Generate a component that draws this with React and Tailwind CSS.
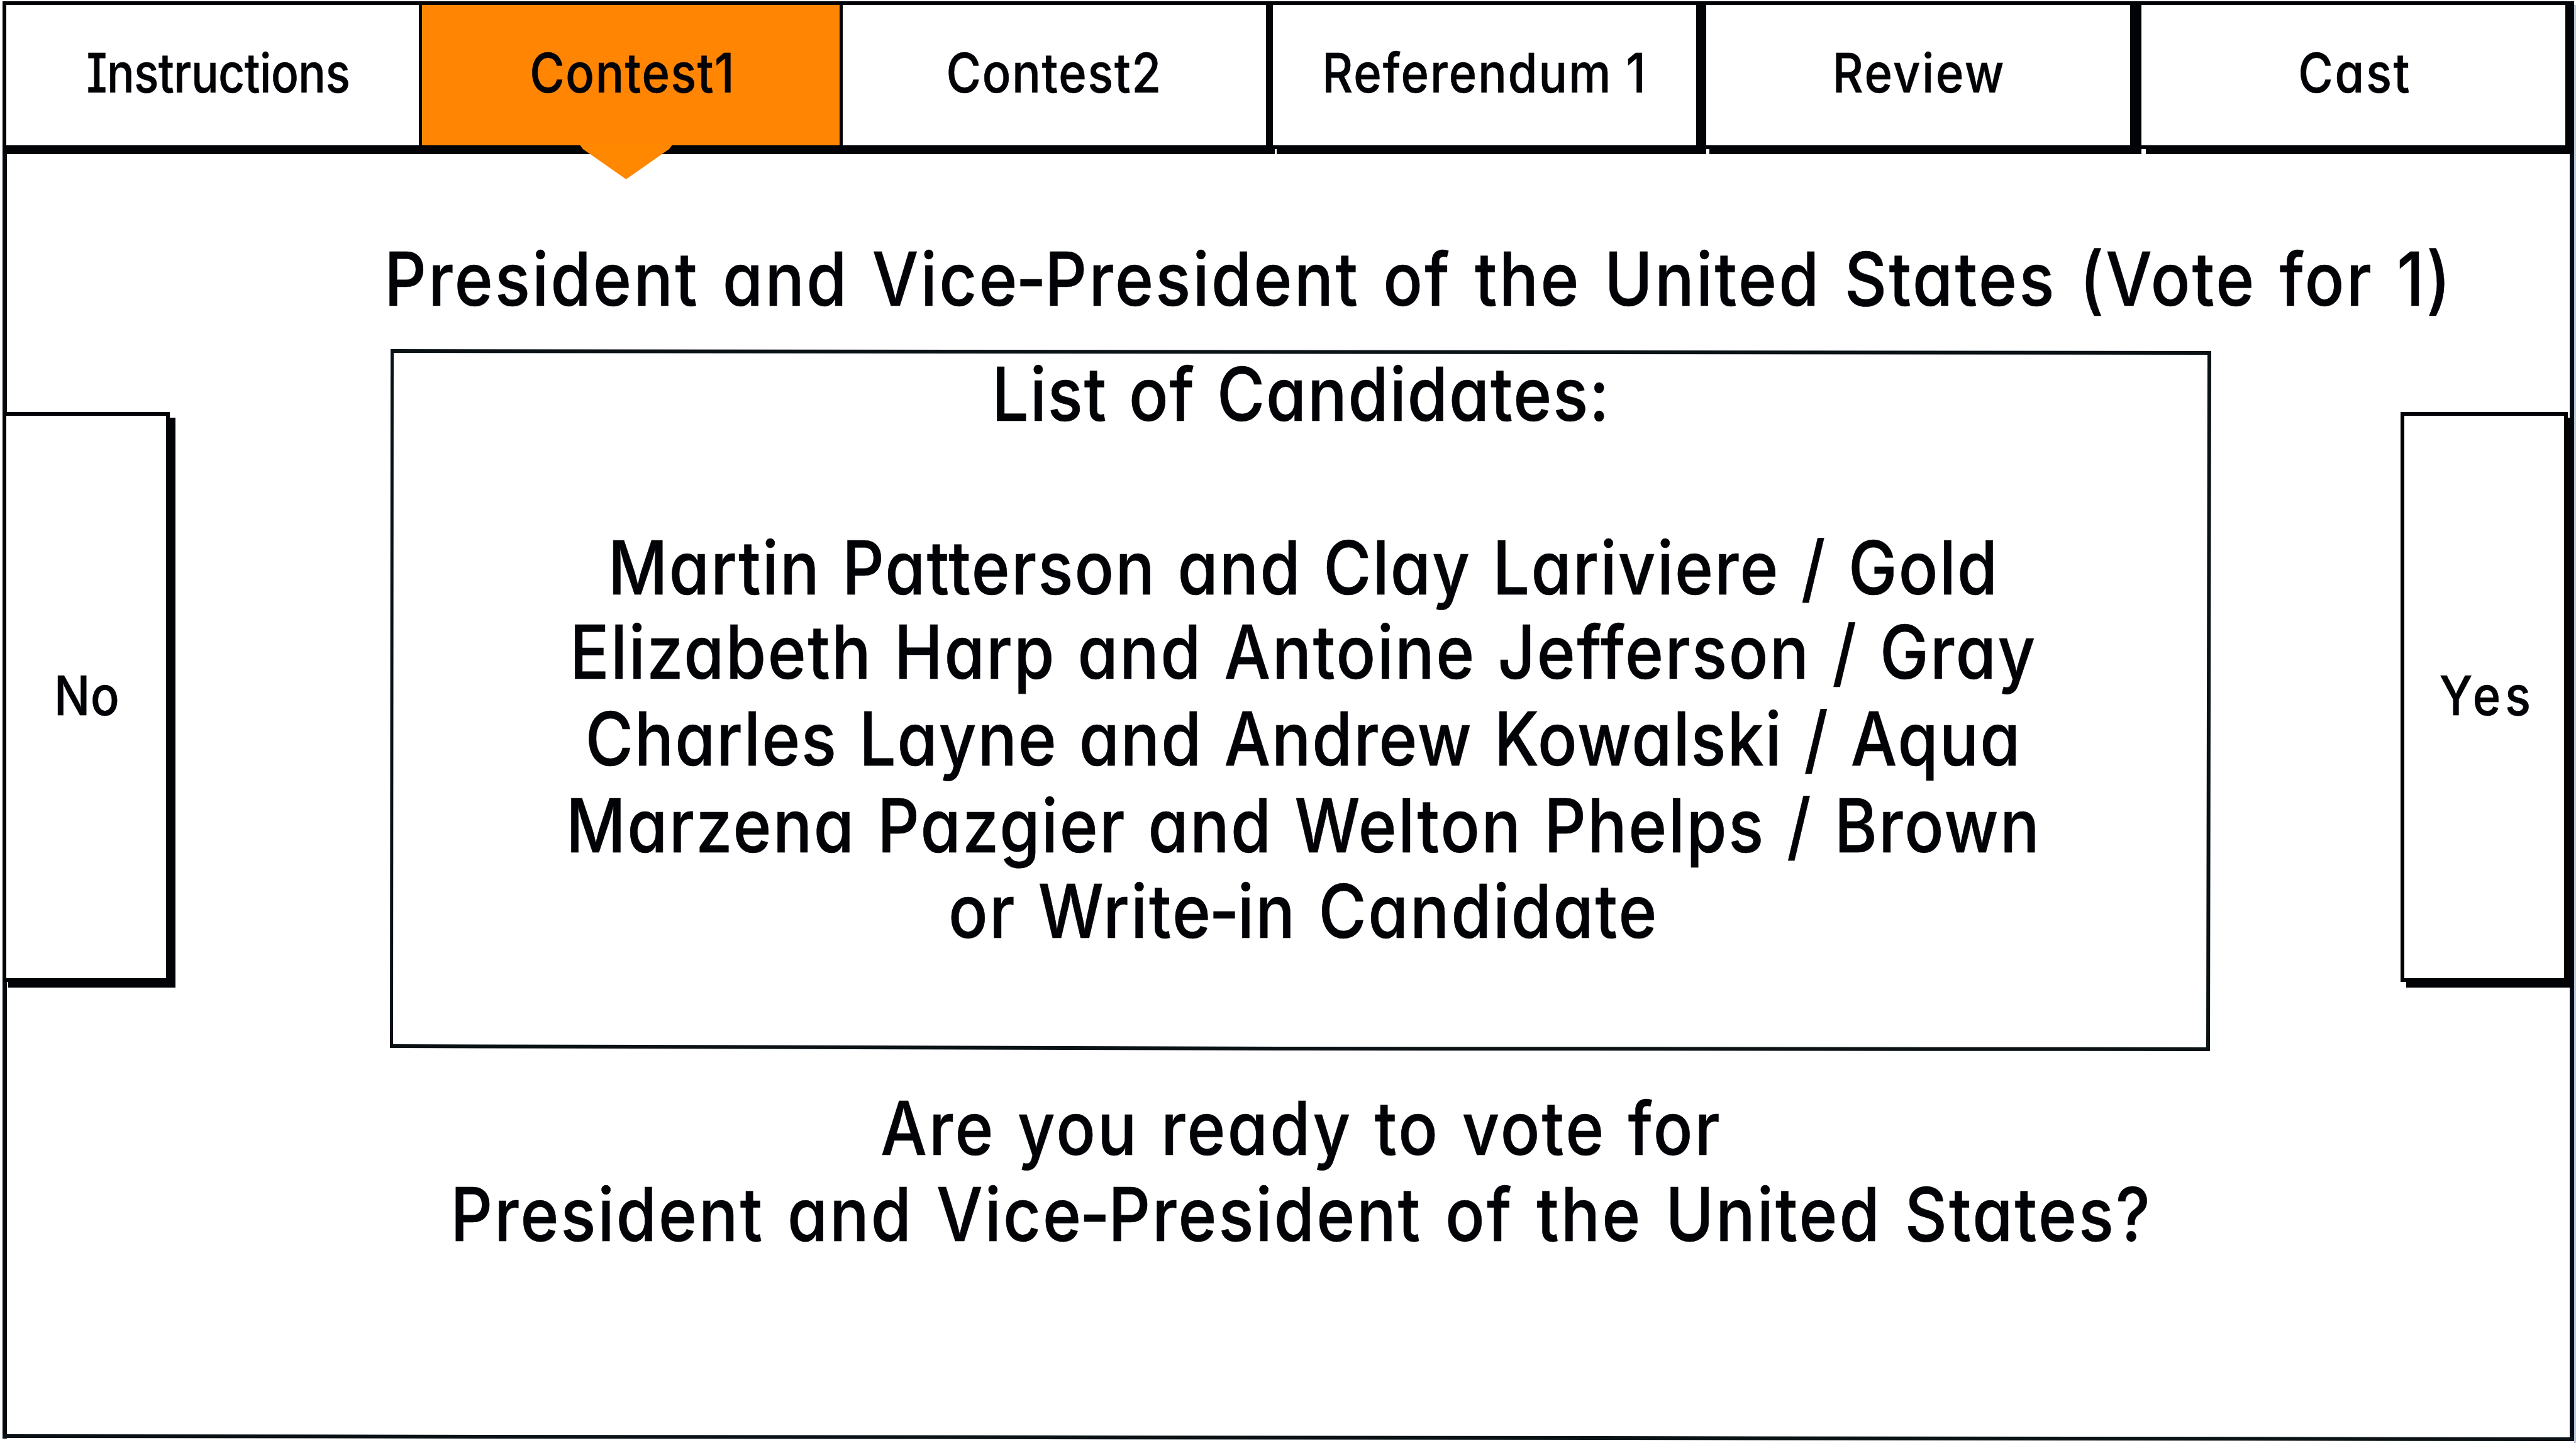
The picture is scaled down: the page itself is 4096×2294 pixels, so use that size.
import { Fragment } from "react";

const tabs = [
  { label: "Instructions", box: "w-[662px] border-l-[6px] pl-[17px] bg-white", text: "scale-x-[0.845] tracking-[-0.5px]" },
  { label: "Contest1", box: "w-[669px] border-l-[5px] pl-[6px] bg-[#ff8503]", text: "scale-x-[0.88] tracking-[1.8px]", active: true },
  { label: "Contest2", box: "w-[689px] border-l-[5px] border-r-[11px] bg-white", text: "scale-x-[0.88] tracking-[2px]" },
  { label: "Referendum 1", box: "w-[689px] border-r-[16px] bg-white", text: "scale-x-[0.88] tracking-[2.3px]", notch: "left-[3px] w-[3px]" },
  { label: "Review", box: "w-[692px] border-r-[18px] pl-[3px] bg-white", text: "scale-x-[0.88] tracking-[3px]", notch: "left-0 w-[5px]" },
  { label: "Cast", box: "w-[688px] border-r-[14px] pl-[4px] bg-white", text: "scale-x-[0.88] tracking-[3.2px]", notch: "left-0 w-[7px]" },
];

const candidates = [
  { text: "List of Candidates:", row: "h-[139px]", track: "tracking-[2.2px] [word-spacing:5px]", shift: "pr-[7px]" },
  { text: "Martin Patterson and Clay Lariviere / Gold", row: "h-[276px]", track: "tracking-[2.5px] [word-spacing:5px]" },
  { text: "Elizabeth Harp and Antoine Jefferson / Gray", row: "h-[134px]", track: "tracking-[2.85px] [word-spacing:5px]" },
  { text: "Charles Layne and Andrew Kowalski / Aqua", row: "h-[138px]", track: "tracking-[2.2px] [word-spacing:5px]" },
  { text: "Marzena Pazgier and Welton Phelps / Brown", row: "h-[138px]", track: "tracking-[2.85px] [word-spacing:5px]" },
  { text: "or Write-in Candidate", row: "h-[136px]", track: "tracking-[3px] [word-spacing:5px]" },
];

function Tab({ label, box, text, active, notch }) {
  return (
    <button
      className={`relative flex h-[243px] shrink-0 items-center justify-center border-t-[6px] border-b-[14px] border-[#020306] pb-[7px] ${box}`}
    >
      <span className={`inline-block text-[86px] leading-[104px] whitespace-nowrap ${text}`}>{label}</span>
      {notch && <span className={`absolute -bottom-[14px] h-[8px] bg-white ${notch}`} />}
      {active && (
        <span className="absolute top-[221px] left-[250px] h-[56px] w-[149px] bg-[#ff8800] [clip-path:polygon(0_0,100%_0,96%_8px,50%_100%,4%_8px)]" />
      )}
    </button>
  );
}

function Line({ text, row, track, shift = "" }) {
  return (
    <div className={`flex items-end justify-center ${row} ${shift}`}>
      <span className={`inline-block shrink-0 scale-x-[0.88] text-[118px] leading-[136px] whitespace-nowrap ${track}`}>
        {text.split("-").map((part, i) => (
          <Fragment key={i}>
            {i > 0 && <span className="-mx-[6px]">-</span>}
            {part}
          </Fragment>
        ))}
      </span>
    </div>
  );
}

function SideButton({ label, track }) {
  return (
    <button className="flex h-[906px] w-[266px] shrink-0 items-center justify-center border-[6px] border-[#020306] bg-white pb-[5px] shadow-[9px_9px_0_0_#020306]">
      <span className={`inline-block scale-x-[0.88] text-[86px] leading-[104px] ${track}`}>{label}</span>
    </button>
  );
}

export default function App() {
  return (
    <div className="relative flex h-[2294px] w-[4096px] flex-col overflow-hidden bg-white font-['Inter',sans-serif] font-medium text-[#020306] [-webkit-text-stroke:0.6px_#020306] [font-feature-settings:'cv11','cv08','liga'_0,'calt'_0]">
      {/* page frame */}
      <div className="absolute top-[8px] left-[4px] h-[2279px] w-[7px] bg-[#050a12]" />
      <div className="absolute top-[8px] left-[4086px] h-[2282px] w-[7px] bg-[#050a12]" />
      <div className="absolute top-[8px] left-[4093px] h-[2286px] w-[3px] bg-[#b9c6d6]" />
      <div className="absolute top-[2280px] left-[4px] h-[6px] w-[4089px] origin-left rotate-[0.07deg] bg-[#0a1216]" />

      <nav className="relative flex pt-[2px] pl-[4px]">
        {tabs.map((tab) => (
          <Tab key={tab.label} {...tab} />
        ))}
      </nav>

      <h1 className="pl-[415px]">
        <Line
          text="President and Vice-President of the United States (Vote for 1)"
          row="h-[266px]"
          track="tracking-[3.75px] [word-spacing:7px]"
        />
      </h1>

      <div className="relative mt-[44px] flex items-start pl-[4px]">
        <div className="pt-[100px]">
          <SideButton label="No" track="tracking-[1px] pl-[3px]" />
        </div>
        <main className="relative ml-[350px] h-[1116px] w-[2896px] shrink-0">
          <div className="absolute inset-0 bg-[#0a1216] [clip-path:polygon(evenodd,1px_0px,2896px_3px,2894px_1116px,1448px_1115px,0px_1111px,1px_0px,6px_6px,2890px_9px,2888px_1110px,1448px_1109px,5px_1105px,6px_6px)]" />
          <div className="pl-[9px]">
            {candidates.map((line) => (
              <Line key={line.text} {...line} />
            ))}
          </div>
        </main>
        <div className="ml-[301px] pt-[100px]">
          <SideButton label="Yes" track="tracking-[8px] pl-[11px]" />
        </div>
      </div>

      <div className="pl-[43px] pt-[53px]">
        <Line text="Are you ready to vote for" row="h-[137px]" track="tracking-[3.7px] [word-spacing:5px]" />
        <Line text="President and Vice-President of the United States?" row="h-[137px]" track="tracking-[3.5px] [word-spacing:7px]" />
      </div>
    </div>
  );
}
